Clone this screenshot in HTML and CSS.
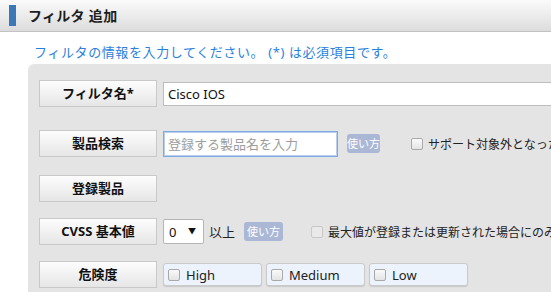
FILE: index.html
```html
<!DOCTYPE html>
<html lang="ja">
<head>
    <meta charset="UTF-8">
    <meta name="viewport" content="width=device-width, initial-scale=1.0">
    <title>フィルタ 追加</title>
    <link rel="stylesheet" href="styles.css">
</head>
<body>
    <div class="head">
        <span class="mark"></span>
        <h1>フィルタ 追加</h1>
    </div>
    <p class="intro">フィルタの情報を入力してください。 (*) は必須項目です。</p>
    <div class="panel">
        <div class="row row-name">
            <div class="label">フィルタ名*</div>
            <input class="text wide" type="text" value="Cisco IOS">
        </div>
        <div class="row row-search">
            <div class="label">製品検索</div>
            <input class="text search" type="text" placeholder="登録する製品名を入力">
            <span class="help">使い方</span>
            <label class="check"><input type="checkbox"> サポート対象外となった製品も検索する</label>
        </div>
        <div class="row">
            <div class="label">登録製品</div>
        </div>
        <div class="row row-cvss">
            <div class="label">CVSS 基本値</div>
            <span class="select"><select><option>0</option><option>1</option><option>2</option></select></span>
            <span class="unit">以上</span>
            <span class="help">使い方</span>
            <label class="check check-off"><input type="checkbox" disabled> 最大値が登録または更新された場合にのみ通知する</label>
        </div>
        <div class="row">
            <div class="label">危険度</div>
            <div class="levels">
                <label class="level"><input type="checkbox"> High</label>
                <label class="level"><input type="checkbox"> Medium</label>
                <label class="level"><input type="checkbox"> Low</label>
            </div>
        </div>
    </div>
</body>
</html>
```

FILE: styles.css
```css
*{
    padding: 0;
    margin: 0;
    box-sizing: border-box;
}
html, body{
    overflow: hidden;
}
body{
    background-color: #fff;
    font-family: "Noto Sans", "Noto Sans CJK JP", sans-serif;
    font-size: 13px;
    color: #222;
}
.head{
    height: 32px;
    display: flex;
    align-items: center;
    padding-left: 9px;
    background: linear-gradient(#fbfbfb, #dcdcdc);
    border-bottom: 1px solid #c2c2c2;
}
.mark{
    width: 7px;
    height: 21px;
    background-color: #3a78b8;
    margin-right: 12px;
}
.head h1{
    font-size: 14px;
    font-weight: bold;
    color: #1e1e1e;
    line-height: 31px;
    letter-spacing: 0.3px;
}
.intro{
    padding: 10px 0 0 34px;
    line-height: 20px;
    color: #2a7fdc;
    white-space: nowrap;
    letter-spacing: 0.6px;
}
.panel{
    margin: 2px 0 0 28px;
    width: 600px;
    height: 300px;
    padding: 16px 0 0 11px;
    background-color: #e4e4e4;
    border-radius: 6px 0 0 0;
}
.row{
    display: flex;
    align-items: center;
    margin-bottom: 16px;
    white-space: nowrap;
}
.row-name{
    margin-bottom: 23px;
}
.row-search{
    margin-bottom: 18px;
}
.row-cvss{
    margin-bottom: 16px;
}
.label{
    width: 118px;
    height: 27px;
    flex-shrink: 0;
    margin-right: 6px;
    line-height: 25px;
    text-align: center;
    font-weight: bold;
    color: #111;
    background: linear-gradient(#fdfdfd, #e6e6e6);
    border: 1px solid #c9c9c9;
}
.text{
    height: 24px;
    padding: 0 4px;
    font-family: inherit;
    font-size: 13px;
    color: #111;
    background-color: #fff;
    border: 1px solid #bdbdbd;
    outline: none;
}
.wide{
    width: 420px;
}
.search{
    width: 175px;
    height: 26px;
    border-color: #7fa8e2;
    box-shadow: 0 0 0 1px #b9cff0 inset;
}
.search::placeholder{
    color: #9c9c9c;
}
.help{
    width: 39px;
    height: 19px;
    line-height: 19px;
    text-align: center;
    font-size: 11px;
    color: #fff;
    background-color: #aab7d5;
    border-radius: 3px;
}
.row-search .help{
    margin-left: 9px;
}
.check{
    display: flex;
    align-items: center;
    margin-left: 28px;
    font-size: 12px;
    color: #222;
}
.row-search .check{
    margin-left: 31px;
}
input[type=checkbox]{
    appearance: none;
    width: 12px;
    height: 12px;
    margin-right: 5px;
    border: 1px solid #a9a9a9;
    border-radius: 2px;
    background: linear-gradient(#fafafa, #e4e4e4);
}
.check-off input[type=checkbox]{
    border-color: #c8c8c8;
    background: #e9e9e9;
}
.select{
    position: relative;
    width: 41px;
    height: 25px;
}
.select select{
    appearance: none;
    width: 41px;
    height: 25px;
    padding-left: 5px;
    font-family: inherit;
    font-size: 13px;
    color: #111;
    background-color: #fff;
    border: 1px solid #b5b5b5;
    border-radius: 2px;
    outline: none;
}
.select::after{
    content: "▼";
    position: absolute;
    right: 8px;
    top: 6px;
    font-size: 8px;
    color: #111;
    pointer-events: none;
}
.unit{
    margin: 0 9px 0 5px;
}
.levels{
    display: flex;
    gap: 4px;
}
.level{
    width: 99px;
    height: 23px;
    display: flex;
    align-items: center;
    padding-left: 4px;
    background-color: #edf3fc;
    border: 1px solid #cacaca;
    border-radius: 3px;
    box-shadow: 0 1px 1px rgba(0,0,0,0.12);
    font-size: 13px;
    color: #222;
}
.level input[type=checkbox]{
    margin-right: 6px;
}
```
